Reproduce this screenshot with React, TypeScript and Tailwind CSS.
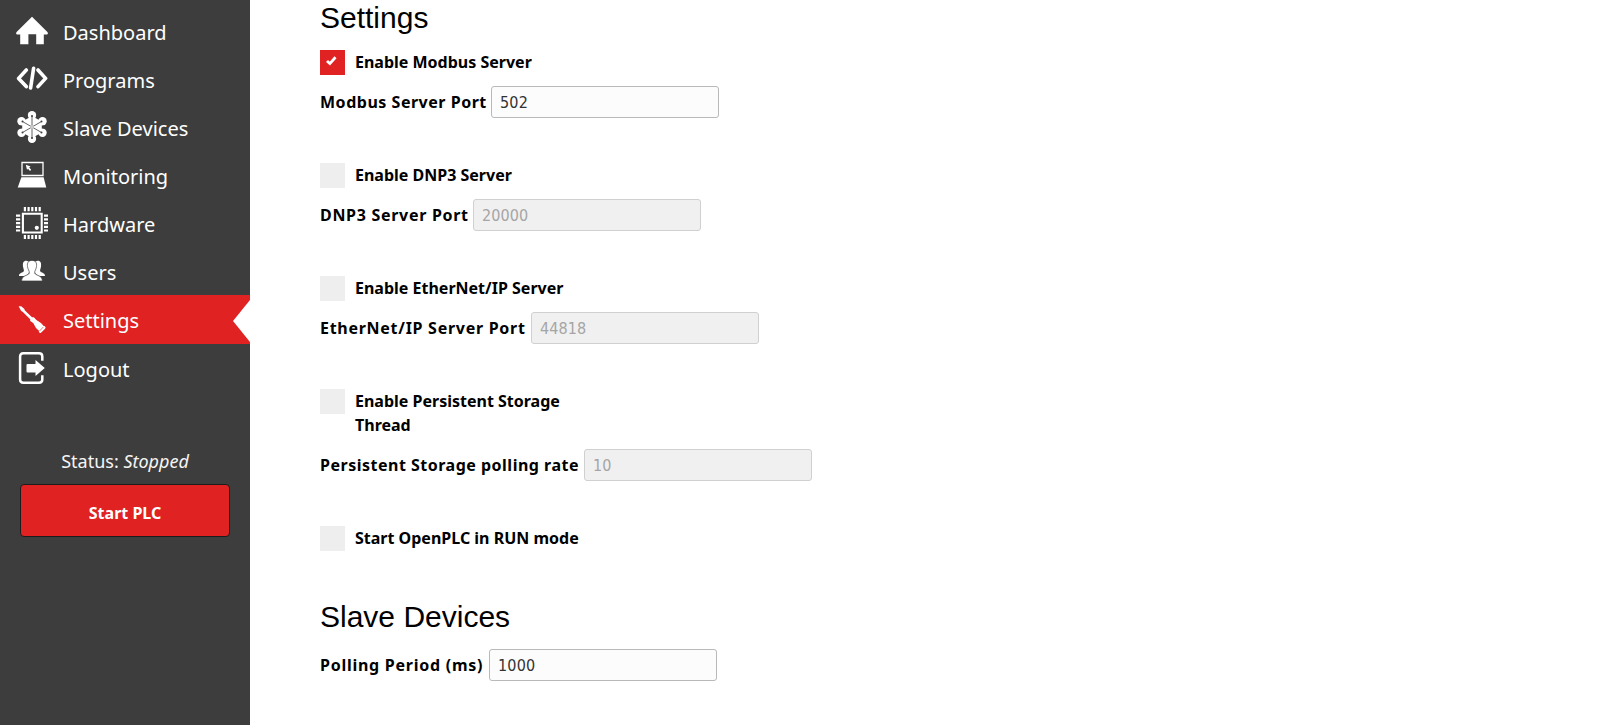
import React from "react";

function HomeIcon() {
  return (
    <svg viewBox="0 0 32 32" className="h-8 w-8" fill="#fff">
      <path d="M16 1.8 31.4 17Q32.6 18.6 31 19.4H27.8V29.2H20.2V19.2H12.4V29.2H4.2V19.400H1Q-.6 18.600.6 17Z" />
    </svg>
  );
}

function CodeIcon() {
  return (
    <svg viewBox="0 0 32 32" className="h-8 w-8" fill="none" stroke="#fff" strokeWidth="3.6" strokeLinecap="round" strokeLinejoin="round">
      <path d="M10.3 7 2.600 15.400 10.300 23.600M22 7 29.600 15.400 22 23.600M17.600 5.300 14.600 25" />
    </svg>
  );
}

function NodesIcon() {
  return (
    <svg viewBox="0 0 32 32" className="h-8 w-8">
      <g fill="#fff">
        <path d="M16 5 25.800 10.500V21.500L16 27 6.200 21.500V10.500Z" />
        <circle cx="16" cy="4.200" r="4.200" />
        <circle cx="16" cy="27.800" r="4.200" />
        <circle cx="5.500" cy="10.200" r="4.200" />
        <circle cx="26.500" cy="10.200" r="4.200" />
        <circle cx="5.500" cy="21.800" r="4.200" />
        <circle cx="26.500" cy="21.800" r="4.200" />
      </g>
      <g fill="#3d3d3d">
        <circle cx="10" cy="5.600" r="2" />
        <circle cx="22" cy="5.600" r="2" />
        <circle cx="4.300" cy="16" r="1.600" />
        <circle cx="27.700" cy="16" r="1.600" />
        <circle cx="10" cy="26.400" r="2" />
        <circle cx="22" cy="26.400" r="2" />
      </g>
      <path d="M16 5V27M6.500 10.500 25.500 21.500M25.500 10.500 6.500 21.500" stroke="#3d3d3d" strokeWidth=".8" />
      <g fill="#3d3d3d">
        <circle cx="16" cy="5" r="1" />
        <circle cx="16" cy="27" r="1" />
        <circle cx="6.500" cy="10.500" r="1" />
        <circle cx="25.500" cy="21.500" r="1" />
        <circle cx="25.500" cy="10.500" r="1" />
        <circle cx="6.500" cy="21.500" r="1" />
      </g>
      <circle cx="16" cy="16" r="1.800" fill="#ccc" />
    </svg>
  );
}

function LaptopIcon() {
  return (
    <svg viewBox="0 0 32 32" className="h-8 w-8" fill="#fff">
      <path d="M6 3.500H27V16.500H6Z" fill="none" stroke="#fff" strokeWidth="1.300" />
      <path d="M5.400 18.200H27.600L30.300 28.600H1.700Z" />
      <path d="M9.800 5.800 14.600 7.400 13.200 8.600 15.200 10.800 14 11.900 12 9.700 11 10.800Z" />
    </svg>
  );
}

function ChipIcon() {
  return (
    <svg viewBox="0 0 32 32" className="h-8 w-8" fill="none" stroke="#fff">
      <path d="M6.900 6.700H25.700V25.500H6.900Z" strokeWidth="2.100" />
      <path d="M8.900 0V4.200M12.600 0V4.200M16.300 0V4.200M20 0V4.200M23.700 0V4.200M8.900 28V32M12.600 28V32M16.300 28V32M20 28V32M23.700 28V32" strokeWidth="2.200" />
      <path d="M0 8.700H4.200M0 12.400H4.200M0 16.100H4.200M0 19.800H4.200M0 23.500H4.200M28 8.700H32M28 12.400H32M28 16.100H32M28 19.800H32M28 23.500H32" strokeWidth="2.200" />
      <circle cx="20.800" cy="20.800" r="2.100" fill="#fff" stroke="none" />
    </svg>
  );
}

function UsersIcon() {
  return (
    <svg viewBox="0 0 32 32" className="h-8 w-8" fill="#fff">
      <path d="M10.500 5.800C7 5.800 6.600 8.500 7 11.500C7.300 14 8.300 15 7.800 16.300C6.800 18 3 17.500 3 21H10L14 17V7Z" />
      <path d="M21.500 5.800C25 5.800 25.400 8.500 25 11.500C24.700 14 23.700 15 24.200 16.300C25.200 18 29 17.500 29 21H22L18 17V7Z" />
      <path
        d="M16 5.400C12.200 5.400 11 8.200 11.500 11.500C11.800 14.500 13.800 16.200 13.200 18.200C12.200 20.800 5.600 20 5.600 26H26.400C26.400 20 19.800 20.800 18.800 18.200C18.200 16.200 20.200 14.500 20.500 11.500C21 8.200 19.800 5.400 16 5.400Z"
        stroke="#3d3d3d"
        strokeWidth=".7"
      />
    </svg>
  );
}

function ScrewdriverIcon() {
  return (
    <svg viewBox="0 0 32 32" className="h-8 w-8" fill="#fff">
      <path d="M2.600 3.300 5.200 3.200 8.400 6 8.700 7.200 16 14.300 17.800 14.300 20.400 17 25 20 28.800 24.200 24.200 29 20 25 17.200 20 14.200 18 14.200 16.200 6.600 8.700 5.200 8Z" />
      <path d="M28 24.600 24.400 28.300" stroke="#fff" strokeWidth="3" strokeLinecap="round" />
      <path d="M27.300 24 23.500 28" stroke="#e02222" strokeWidth=".6" />
    </svg>
  );
}

function LogoutIcon() {
  return (
    <svg viewBox="0 0 32 32" className="h-8 w-8" fill="none">
      <path d="M26.300 8.700V4.500Q26.300 1.300 23 1.300H7.300Q4.100 1.300 4.100 4.500V27.500Q4.100 30.700 7.300 30.700H23Q26.300 30.700 26.300 27.500V23.300" stroke="#fff" strokeWidth="2.500" />
      <path d="M11.500 12H19.500V8L28.800 16 19.500 24V20.500H11.500Q10.500 20.500 10.500 19.500V13Q10.500 12 11.500 12Z" fill="#fff" />
    </svg>
  );
}

const navItems = [
  { label: "Dashboard", icon: <HomeIcon /> },
  { label: "Programs", icon: <CodeIcon /> },
  { label: "Slave Devices", icon: <NodesIcon /> },
  { label: "Monitoring", icon: <LaptopIcon /> },
  { label: "Hardware", icon: <ChipIcon /> },
  { label: "Users", icon: <UsersIcon /> },
  { label: "Settings", icon: <ScrewdriverIcon />, active: true },
  { label: "Logout", icon: <LogoutIcon /> },
];

function NavItem({ label, icon, active }: { label: string; icon: React.ReactNode; active?: boolean }) {
  return (
    <a className={active ? "flex h-[49px] items-start justify-between bg-[#e02222]" : "flex h-12 items-start"}>
      <span className="flex items-start pl-4">
        <span className="mt-2">{icon}</span>
        <span className="mt-3 ml-[15px] text-xl leading-7 text-white">{label}</span>
      </span>
      {active && (
        <svg viewBox="0 0 17 42" className="mt-[5px] h-[42px] w-[17px]" fill="#fff">
          <path d="M17 0V42L0 21Z" />
        </svg>
      )}
    </a>
  );
}

function Check({ label, checked }: { label: string; checked?: boolean }) {
  return (
    <label className="flex w-[280px] items-start gap-[10px]">
      <span className={checked ? "h-[25px] w-[25px] shrink-0 bg-[#e02222]" : "h-[25px] w-[25px] shrink-0 bg-[#eee]"}>
        {checked && (
          <svg viewBox="0 0 25 25" className="h-[25px] w-[25px]" fill="none" stroke="#fff" strokeWidth="2.800">
            <path d="M7 10.900 9.900 13.600 15.500 7.300" />
          </svg>
        )}
      </span>
      <span className="text-base leading-6 font-bold">{label}</span>
    </label>
  );
}

function Field({ label, layout, value, disabled }: { label: string; layout: string; value: string; disabled?: boolean }) {
  return (
    <div className="flex h-8 items-center font-['DejaVu_Sans_Condensed','DejaVu_Sans',sans-serif]">
      <span className={`${layout} shrink-0 font-['Noto_Sans',sans-serif] text-base font-bold whitespace-nowrap`}>{label}</span>
      <input
        readOnly
        value={value}
        disabled={disabled}
        className={
          disabled
            ? "h-8 w-[228px] rounded-[3px] border border-[#d0d0d0] bg-[#f0f0f0] px-2 text-base tracking-[0.1px] text-[#a5a5a5]"
            : "h-8 w-[228px] rounded-[3px] border border-[#b9b9b9] bg-[#fcfcfc] px-2 text-base tracking-[0.2px] text-[#333]"
        }
      />
    </div>
  );
}

export default function App() {
  return (
    <div className="flex h-[725px] overflow-hidden bg-white font-['Noto_Sans',sans-serif] text-black">
      <aside className="flex w-[250px] shrink-0 flex-col bg-[#3d3d3d] pt-[7px]">
        <nav>
          {navItems.map((item) => (
            <NavItem key={item.label} {...item} />
          ))}
        </nav>
        <p className="mt-[55px] text-center text-lg leading-7 text-[#f5f5f5]">
          Status: <em>Stopped</em>
        </p>
        <button className="mx-5 mt-[9px] h-[53px] rounded-[4px] border border-[#1c1c1c] bg-[#e02222] pt-1 text-base font-bold text-white">
          Start PLC
        </button>
      </aside>
      <main className="flex flex-col pl-[70px]">
        <h2 className="h-[50px] font-['Liberation_Sans',Arial,sans-serif] text-[30px] leading-[35px]">Settings</h2>
        <div className="flex flex-col gap-[45px]">
          <section className="flex flex-col gap-[11px]">
            <Check label="Enable Modbus Server" checked />
            <Field label="Modbus Server Port" layout="w-[171px] tracking-[0.52px]" value="502" />
          </section>
          <section className="flex flex-col gap-[11px]">
            <Check label="Enable DNP3 Server" />
            <Field label="DNP3 Server Port" layout="w-[153px] tracking-[0.7px]" value="20000" disabled />
          </section>
          <section className="flex flex-col gap-[11px]">
            <Check label="Enable EtherNet/IP Server" />
            <Field label="EtherNet/IP Server Port" layout="w-[211px] tracking-[0.72px]" value="44818" disabled />
          </section>
          <section className="flex flex-col gap-3">
            <Check label="Enable Persistent Storage Thread" />
            <Field label="Persistent Storage polling rate" layout="w-[264px] tracking-[0.5px]" value="10" disabled />
          </section>
          <Check label="Start OpenPLC in RUN mode" />
        </div>
        <h2 className="mt-[48px] h-[50px] font-['Liberation_Sans',Arial,sans-serif] text-[30px] leading-[35px]">Slave Devices</h2>
        <Field label="Polling Period (ms)" layout="w-[169px] tracking-[0.74px]" value="1000" />
      </main>
    </div>
  );
}
